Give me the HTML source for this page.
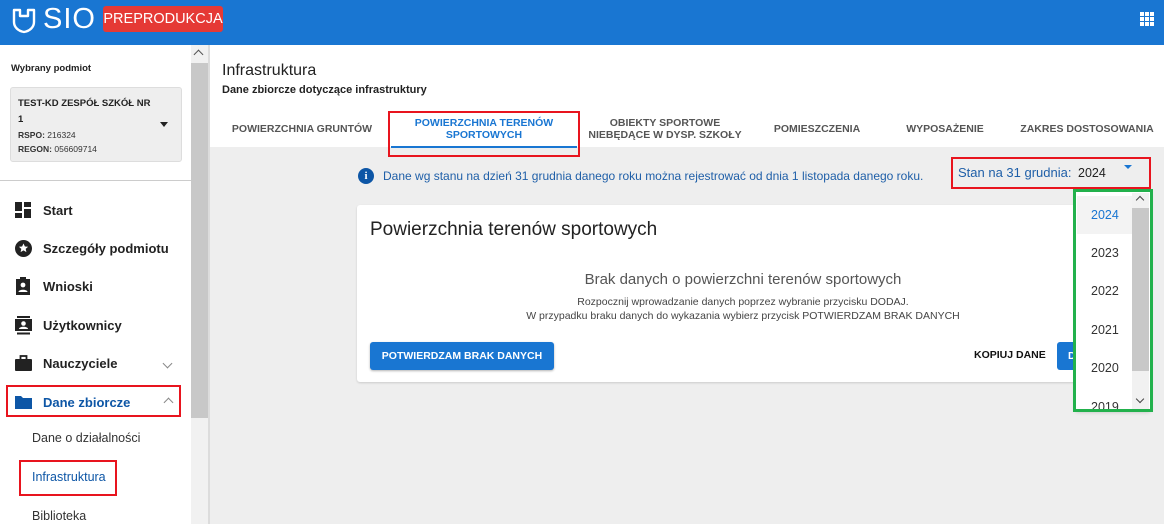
<!DOCTYPE html>
<html><head><meta charset="utf-8"><style>
*{margin:0;padding:0;box-sizing:border-box}
body{width:1164px;height:524px;overflow:hidden;font-family:"Liberation Sans",Arial,sans-serif;background:#eeeeee;position:relative;color:#222}
.abs{position:absolute}
.hdr{left:0;top:0;width:1164px;height:45px;background:#1976d2;box-shadow:0 1px 3px rgba(0,0,0,.3)}
.side{left:0;top:45px;width:191px;height:479px;background:#fff}
.sb{left:191px;top:45px;width:17px;height:479px;background:#f1f1f1}
.nav{position:absolute;left:43px;font-size:13px;font-weight:bold;color:#222}
.ic{position:absolute;left:15px}
.tab{position:absolute;font-size:10.5px;font-weight:bold;color:#555;text-align:center;line-height:12px;white-space:nowrap}
.yr{position:absolute;left:1077px;width:55px;height:38px;font-size:12.5px;color:#333;padding-left:14px;line-height:38px}
</style></head><body>
<div class="abs hdr"></div>
<svg class="abs" style="left:12px;top:8px" width="24" height="26" viewBox="0 0 24 26"><path d="M2 2h6v6h8V2h6v12c0 5-4 9-10 10C6 23 2 19 2 14z" fill="none" stroke="#fff" stroke-width="2.4" stroke-linejoin="round"/></svg>
<div class="abs" style="left:43px;top:3px;font-size:29px;color:#fff;letter-spacing:1px">SIO</div>
<div class="abs" style="left:103px;top:6px;width:120px;height:26px;background:#e53935;border-radius:3px;color:#fff;font-size:14.5px;line-height:26px;text-align:center;white-space:nowrap;overflow:hidden">PREPRODUKCJA</div>
<svg class="abs" style="left:1140px;top:12px" width="14" height="14" viewBox="0 0 14 14" fill="#fff"><rect x="0" y="0" width="4" height="4"/><rect x="5" y="0" width="4" height="4"/><rect x="10" y="0" width="4" height="4"/><rect x="0" y="5" width="4" height="4"/><rect x="5" y="5" width="4" height="4"/><rect x="10" y="5" width="4" height="4"/><rect x="0" y="10" width="4" height="4"/><rect x="5" y="10" width="4" height="4"/><rect x="10" y="10" width="4" height="4"/></svg>

<div class="abs side"></div>
<div class="abs sb"></div>
<div class="abs" style="left:191px;top:63px;width:17px;height:355px;background:#c8c8c8"></div>
<div class="abs" style="left:195px;top:51px;width:7px;height:7px;border-left:1.3px solid #555;border-top:1.3px solid #555;transform:rotate(45deg)"></div>
<div class="abs" style="left:208px;top:45px;width:2px;height:479px;background:#dcdcdc"></div>
<div class="abs" style="left:11px;top:63px;font-size:9.5px;font-weight:bold">Wybrany podmiot</div>
<div class="abs" style="left:10px;top:87px;width:172px;height:75px;background:#eeeeee;border:1px solid #ddd;border-radius:3px"></div>
<div class="abs" style="left:18px;top:96px;font-size:9.5px;font-weight:bold;line-height:16px">TEST-KD ZESPÓŁ SZKÓŁ NR<br>1</div>
<div class="abs" style="left:18px;top:128px;font-size:8.5px;line-height:14px;color:#333"><b>RSPO:</b> 216324<br><b>REGON:</b> 056609714</div>
<div class="abs" style="left:160px;top:122px;width:0;height:0;border-left:4px solid transparent;border-right:4px solid transparent;border-top:5px solid #222"></div>
<div class="abs" style="left:0;top:180px;width:191px;height:1px;background:#ccc"></div>

<svg class="ic" style="top:202px" width="16" height="16" viewBox="0 0 16 16" fill="#222"><rect x="0" y="0" width="7" height="9"/><rect x="9" y="0" width="7" height="5"/><rect x="0" y="11" width="7" height="5"/><rect x="9" y="7" width="7" height="9"/></svg>
<div class="nav" style="top:203px">Start</div>
<svg class="ic" style="top:240px" width="17" height="17" viewBox="0 0 17 17"><circle cx="8.5" cy="8.5" r="8.5" fill="#222"/><path d="M8.5 3.5l1.4 3 3.2.3-2.4 2.1.7 3.2-2.9-1.7-2.9 1.7.7-3.2-2.4-2.1 3.2-.3z" fill="#fff"/></svg>
<div class="nav" style="top:241px">Szczegóły podmiotu</div>
<svg class="ic" style="top:277px" width="16" height="18" viewBox="0 0 16 18"><rect x="1" y="2" width="14" height="16" fill="#222"/><rect x="5" y="0" width="6" height="4" fill="#222"/><circle cx="8" cy="8" r="2.4" fill="#fff"/><path d="M3.5 15c0-3 9-3 9 0z" fill="#fff"/></svg>
<div class="nav" style="top:279px">Wnioski</div>
<svg class="ic" style="top:316px" width="17" height="19" viewBox="0 0 17 19"><rect x="2" y="0" width="13" height="2" fill="#222"/><rect x="0" y="3" width="17" height="12" fill="#222"/><rect x="2" y="16.5" width="13" height="2" fill="#222"/><circle cx="8.5" cy="7.5" r="2.3" fill="#fff"/><path d="M4 13c0-3 9-3 9 0z" fill="#fff"/></svg>
<div class="nav" style="top:318px">Użytkownicy</div>
<svg class="ic" style="top:355px" width="17" height="16" viewBox="0 0 17 16"><rect x="0" y="4" width="17" height="12" rx="1" fill="#222"/><rect x="5.5" y="1" width="6" height="4" fill="none" stroke="#222" stroke-width="1.8"/></svg>
<div class="nav" style="top:356px">Nauczyciele</div>
<div class="abs" style="left:164px;top:360px;width:7px;height:7px;border-right:1.3px solid #888;border-bottom:1.3px solid #888;transform:rotate(45deg)"></div>
<svg class="ic" style="top:395px" width="17" height="14" viewBox="0 0 17 14"><path d="M0 1h6l2 2h9v11H0z" fill="#0d56a6"/></svg>
<div class="nav" style="top:395px;color:#0d56a6">Dane zbiorcze</div>
<div class="abs" style="left:165px;top:399px;width:7px;height:7px;border-left:1.3px solid #888;border-top:1.3px solid #888;transform:rotate(45deg)"></div>
<div class="abs" style="left:6px;top:385px;width:175px;height:32px;border:2px solid #e8141e"></div>
<div class="abs" style="left:32px;top:431px;font-size:12.5px;color:#333">Dane o działalności</div>
<div class="abs" style="left:32px;top:470px;font-size:12.5px;color:#0d56a6">Infrastruktura</div>
<div class="abs" style="left:19px;top:460px;width:98px;height:36px;border:2px solid #e8141e"></div>
<div class="abs" style="left:32px;top:509px;font-size:12.5px;color:#333">Biblioteka</div>

<div class="abs" style="left:210px;top:45px;width:954px;height:102px;background:#fff"></div>
<div class="abs" style="left:222px;top:62px;font-size:16px;color:#222">Infrastruktura</div>
<div class="abs" style="left:222px;top:84px;font-size:11px;font-weight:bold;color:#222">Dane zbiorcze dotyczące infrastruktury</div>
<div class="tab" style="left:222px;top:123px;width:160px">POWIERZCHNIA GRUNTÓW</div>
<div class="tab" style="left:393px;top:117px;width:182px;color:#1976d2">POWIERZCHNIA TERENÓW<br>SPORTOWYCH</div>
<div class="abs" style="left:391px;top:146px;width:186px;height:2px;background:#1976d2"></div>
<div class="abs" style="left:388px;top:111px;width:192px;height:46px;border:2px solid #e8141e"></div>
<div class="tab" style="left:585px;top:117px;width:160px">OBIEKTY SPORTOWE<br>NIEBĘDĄCE W DYSP. SZKOŁY</div>
<div class="tab" style="left:752px;top:123px;width:130px">POMIESZCZENIA</div>
<div class="tab" style="left:890px;top:123px;width:110px">WYPOSAŻENIE</div>
<div class="tab" style="left:1012px;top:123px;width:150px">ZAKRES DOSTOSOWANIA</div>

<div class="abs" style="left:358px;top:168px;width:16px;height:16px;border-radius:50%;background:#0d56a6;color:#fff;font-size:11px;font-weight:bold;text-align:center;line-height:16px;font-family:'Liberation Serif',serif">i</div>
<div class="abs" style="left:383px;top:169px;font-size:12px;color:#1f5fa8">Dane wg stanu na dzień 31 grudnia danego roku można rejestrować od dnia 1 listopada danego roku.</div>
<div class="abs" style="left:951px;top:157px;width:200px;height:32px;border:2px solid #e8141e"></div>
<div class="abs" style="left:958px;top:165px;font-size:13px;color:#1f5fa8">Stan na 31 grudnia:</div>
<div class="abs" style="left:1078px;top:166px;font-size:12.5px;color:#222">2024</div>
<div class="abs" style="left:1124px;top:165px;width:0;height:0;border-left:4px solid transparent;border-right:4px solid transparent;border-top:4px solid #1976d2"></div>

<div class="abs" style="left:357px;top:205px;width:750px;height:177px;background:#fff;border-radius:3px;box-shadow:0 1px 2px rgba(0,0,0,.15)"></div>
<div class="abs" style="left:370px;top:219px;font-size:19px;color:#222">Powierzchnia terenów sportowych</div>
<div class="abs" style="left:357px;top:271px;width:772px;text-align:center;font-size:15px;color:#555">Brak danych o powierzchni terenów sportowych</div>
<div class="abs" style="left:357px;top:295px;width:772px;text-align:center;font-size:10.5px;color:#444;line-height:14px">Rozpocznij wprowadzanie danych poprzez wybranie przycisku DODAJ.<br>W przypadku braku danych do wykazania wybierz przycisk POTWIERDZAM BRAK DANYCH</div>
<div class="abs" style="left:370px;top:342px;width:184px;height:28px;background:#1976d2;border-radius:3px;color:#fff;font-size:10.5px;font-weight:bold;text-align:center;line-height:28px;box-shadow:0 1px 2px rgba(0,0,0,.3)">POTWIERDZAM BRAK DANYCH</div>
<div class="abs" style="left:974px;top:349px;font-size:10.5px;font-weight:bold;color:#111">KOPIUJ DANE</div>
<div class="abs" style="left:1057px;top:342px;width:40px;height:28px;background:#1976d2;border-radius:3px;color:#fff;font-size:10.5px;font-weight:bold;line-height:28px;padding-left:11px">D</div>

<div class="abs" style="left:1076px;top:192px;width:74px;height:218px;background:#fff;box-shadow:0 2px 4px rgba(0,0,0,.2)"></div>
<div class="abs" style="left:1077px;top:196px;width:55px;height:38px;background:#f3f3f3"></div>
<div class="yr" style="top:196px;color:#1976d2">2024</div>
<div class="yr" style="top:234px">2023</div>
<div class="yr" style="top:272px">2022</div>
<div class="yr" style="top:311px">2021</div>
<div class="yr" style="top:349px">2020</div>
<div class="abs" style="left:1077px;top:394px;width:55px;height:15px;overflow:hidden"><div style="padding-left:14px;font-size:12.5px;color:#333;line-height:26px">2019</div></div>
<div class="abs" style="left:1132px;top:193px;width:17px;height:216px;background:#f1f1f1"></div>
<div class="abs" style="left:1132px;top:208px;width:17px;height:163px;background:#c8c8c8"></div>
<div class="abs" style="left:1137px;top:197px;width:6px;height:6px;border-left:1.3px solid #444;border-top:1.3px solid #444;transform:rotate(45deg)"></div>
<div class="abs" style="left:1137px;top:396px;width:6px;height:6px;border-right:1.3px solid #444;border-bottom:1.3px solid #444;transform:rotate(45deg)"></div>
<div class="abs" style="left:1073px;top:189px;width:80px;height:223px;border:3px solid #22b14c"></div>
</body></html>
